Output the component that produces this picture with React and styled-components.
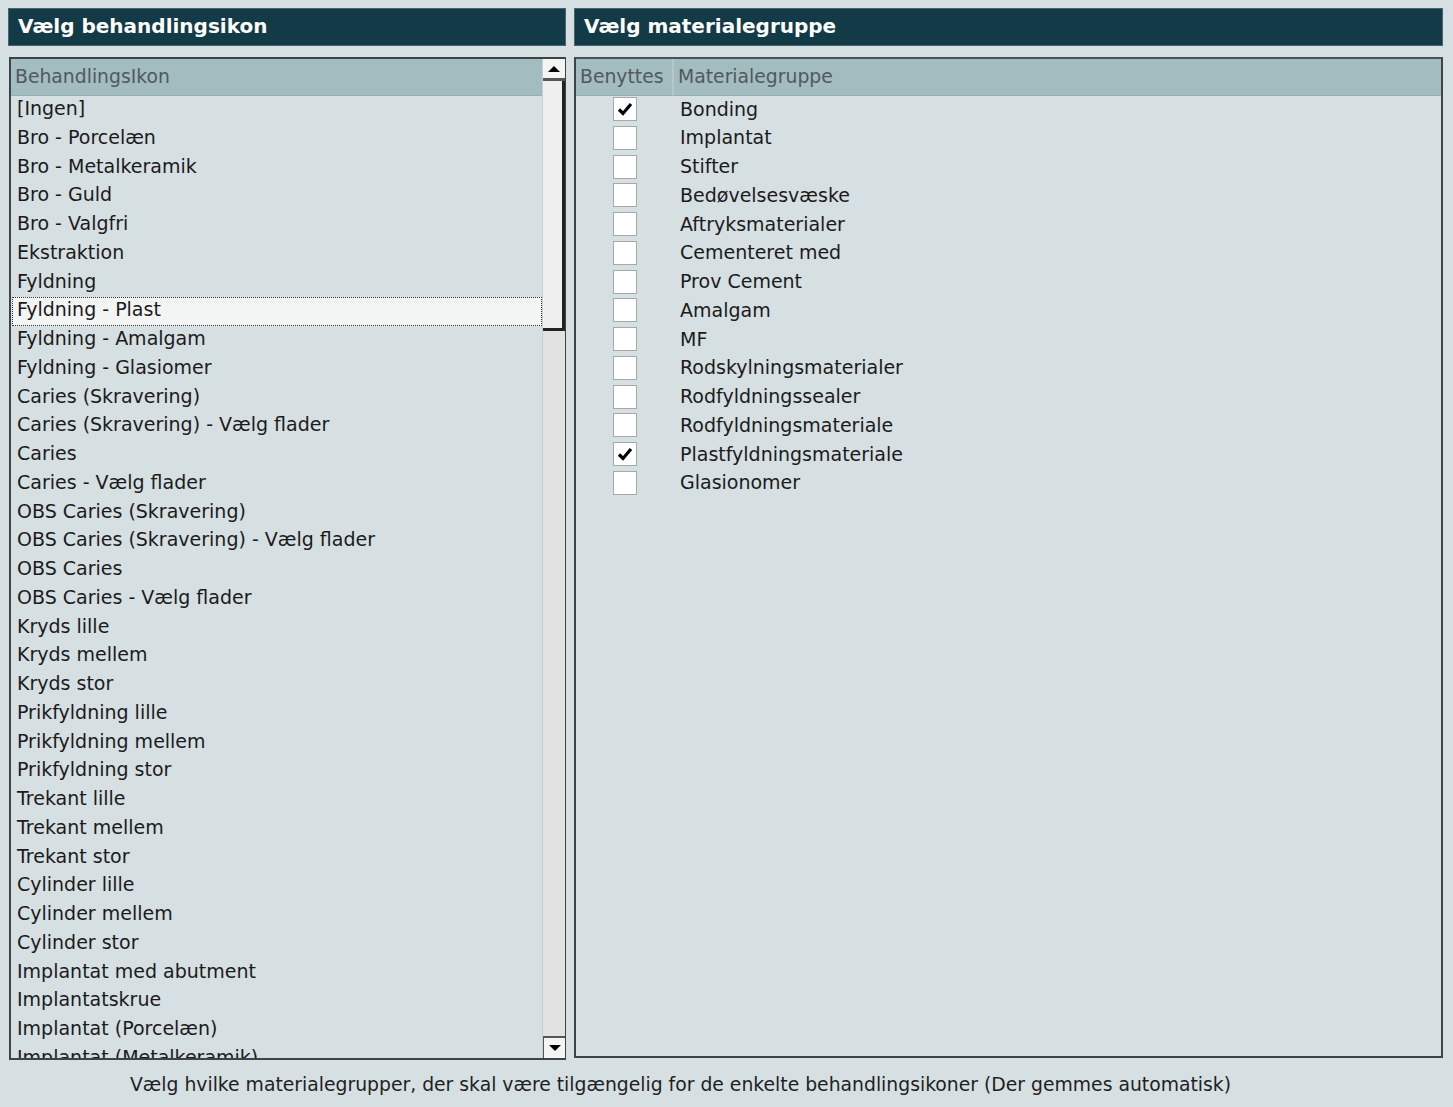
import React, { useState } from "react";
import styled, { createGlobalStyle } from "styled-components";

const ikoner = [
  "[Ingen]",
  "Bro - Porcelæn",
  "Bro - Metalkeramik",
  "Bro - Guld",
  "Bro - Valgfri",
  "Ekstraktion",
  "Fyldning",
  "Fyldning - Plast",
  "Fyldning - Amalgam",
  "Fyldning - Glasiomer",
  "Caries (Skravering)",
  "Caries (Skravering) - Vælg flader",
  "Caries",
  "Caries - Vælg flader",
  "OBS Caries (Skravering)",
  "OBS Caries (Skravering) - Vælg flader",
  "OBS Caries",
  "OBS Caries - Vælg flader",
  "Kryds lille",
  "Kryds mellem",
  "Kryds stor",
  "Prikfyldning lille",
  "Prikfyldning mellem",
  "Prikfyldning stor",
  "Trekant lille",
  "Trekant mellem",
  "Trekant stor",
  "Cylinder lille",
  "Cylinder mellem",
  "Cylinder stor",
  "Implantat med abutment",
  "Implantatskrue",
  "Implantat (Porcelæn)",
  "Implantat (Metalkeramik)",
];

const grupper = [
  { navn: "Bonding", valgt: true },
  { navn: "Implantat", valgt: false },
  { navn: "Stifter", valgt: false },
  { navn: "Bedøvelsesvæske", valgt: false },
  { navn: "Aftryksmaterialer", valgt: false },
  { navn: "Cementeret med", valgt: false },
  { navn: "Prov Cement", valgt: false },
  { navn: "Amalgam", valgt: false },
  { navn: "MF", valgt: false },
  { navn: "Rodskylningsmaterialer", valgt: false },
  { navn: "Rodfyldningssealer", valgt: false },
  { navn: "Rodfyldningsmateriale", valgt: false },
  { navn: "Plastfyldningsmateriale", valgt: true },
  { navn: "Glasionomer", valgt: false },
];

const App = () => {
  const [valgtIkon, setValgtIkon] = useState(7);
  const [materialer, setMaterialer] = useState(grupper);

  const toggle = (idx) => {
    const nye = [...materialer];
    nye[idx] = { ...nye[idx], valgt: !nye[idx].valgt };
    setMaterialer(nye);
  };

  return (
    <>
      <GlobalStyle />
      <Page>
        <Columns>
          <Column>
            <Title>Vælg behandlingsikon</Title>
            <ListBox>
              <ListMain>
                <HeadCell>BehandlingsIkon</HeadCell>
                <Rows>
                  {ikoner.map((navn, idx) => (
                    <IconRow
                      key={idx}
                      selected={idx === valgtIkon}
                      onClick={() => setValgtIkon(idx)}
                    >
                      {navn}
                    </IconRow>
                  ))}
                </Rows>
              </ListMain>
              <ScrollBar>
                <ArrowBtn>
                  <Arrow />
                </ArrowBtn>
                <Thumb />
                <Track />
                <ArrowBtn down>
                  <Arrow down />
                </ArrowBtn>
              </ScrollBar>
            </ListBox>
          </Column>
          <Column>
            <Title>Vælg materialegruppe</Title>
            <GridBox>
              <GridHead>
                <HeadCell divider>Benyttes</HeadCell>
                <HeadCell>Materialegruppe</HeadCell>
              </GridHead>
              {materialer.map(({ navn, valgt }, idx) => (
                <GridRow key={navn}>
                  <CheckCell>
                    <Check onClick={() => toggle(idx)}>
                      {valgt && (
                        <svg width="16" height="14" viewBox="0 0 16 14">
                          <path
                            d="M2 7.5 L6 11.5 L14 2"
                            fill="none"
                            stroke="#000"
                            strokeWidth="3.2"
                          />
                        </svg>
                      )}
                    </Check>
                  </CheckCell>
                  <NameCell>{navn}</NameCell>
                </GridRow>
              ))}
            </GridBox>
          </Column>
        </Columns>
        <Footer>
          Vælg hvilke materialegrupper, der skal være tilgængelig for de enkelte
          behandlingsikoner (Der gemmes automatisk)
        </Footer>
      </Page>
    </>
  );
};

const GlobalStyle = createGlobalStyle`
  html, body {
    margin: 0;
    background: #d6dfe2;
    font-family: "DejaVu Sans", Verdana, sans-serif;
  }
`;

const Page = styled.div`
  width: 1453px;
  height: 1107px;
  box-sizing: border-box;
  padding: 8px 10px 0 8px;
  display: flex;
  flex-direction: column;
  background: #d6dfe2;
  overflow: hidden;
`;

const Columns = styled.div`
  display: grid;
  grid-template-columns: 558px 869px;
  gap: 8px;
`;

const Column = styled.div`
  display: flex;
  flex-direction: column;
  gap: 11px;
`;

const Title = styled.div`
  height: 38px;
  box-sizing: border-box;
  background: #133a47;
  border: 1px solid #46656c;
  color: #fff;
  font-weight: bold;
  font-size: 20px;
  line-height: 35px;
  padding-left: 9px;
`;

const ListBox = styled.div`
  margin-left: 1px;
  height: 1003px;
  box-sizing: border-box;
  border: 2px solid #3d4446;
  border-right-width: 1px;
  display: flex;
  overflow: hidden;
`;

const ListMain = styled.div`
  flex: 1;
  display: flex;
  flex-direction: column;
  min-width: 0;
`;

const HeadCell = styled.div`
  height: 37px;
  box-sizing: border-box;
  background: #a3bcbf;
  color: #4f5a5c;
  font-size: 18.8px;
  line-height: 35px;
  padding-left: 4px;
  border-bottom: 1px solid #94aeb1;
  border-right: ${(p) => (p.divider ? "2px solid #b5c9cb" : "none")};
  white-space: nowrap;
`;

const Rows = styled.div`
  flex: 1;
  overflow: hidden;
  padding-left: 1px;
`;

const IconRow = styled.div`
  height: 28.75px;
  box-sizing: border-box;
  line-height: 23px;
  font-size: 19px;
  color: #1b1b1b;
  padding-left: 4px;
  white-space: nowrap;
  cursor: default;
  background: ${(p) => (p.selected ? "#f3f4f4" : "transparent")};
  border: 1px dotted ${(p) => (p.selected ? "#333" : "transparent")};
`;

const ScrollBar = styled.div`
  width: 22px;
  display: flex;
  flex-direction: column;
  background: #e4e4e4;
  border-left: 1px solid #c9cfd0;
`;

const ArrowBtn = styled.div`
  height: 22px;
  box-sizing: border-box;
  background: #f4f4f4;
  border: 1px solid #555;
  border-width: ${(p) => (p.down ? "2px 0 0 1px" : "0 0 3px 0")};
  display: flex;
  align-items: center;
  justify-content: center;
`;

const Arrow = styled.div`
  width: 0;
  height: 0;
  border-left: 6px solid transparent;
  border-right: 6px solid transparent;
  border-bottom: ${(p) => (p.down ? "none" : "6px solid #000")};
  border-top: ${(p) => (p.down ? "6px solid #000" : "none")};
`;

const Thumb = styled.div`
  height: 250px;
  box-sizing: border-box;
  background: #f0f0f0;
  border-right: 3px solid #222;
  border-bottom: 3px solid #222;
`;

const Track = styled.div`
  flex: 1;
  background: #e2e2e2;
`;

const GridBox = styled.div`
  height: 1001px;
  box-sizing: border-box;
  border: 2px solid #3d4446;
  border-top-color: #4a5254;
  overflow: hidden;
`;

const GridHead = styled.div`
  display: grid;
  grid-template-columns: 98px 1fr;
`;

const GridRow = styled.div`
  display: grid;
  grid-template-columns: 98px 1fr;
  height: 28.75px;
  box-sizing: border-box;
  padding-bottom: 4px;
  align-items: center;
`;

const CheckCell = styled.div`
  display: flex;
  justify-content: flex-start;
  padding-left: 37px;
  padding-top: 1px;
`;

const Check = styled.div`
  width: 24px;
  height: 24px;
  box-sizing: border-box;
  background: #fff;
  border: 1px solid #a8a8a8;
  display: flex;
  align-items: center;
  justify-content: center;
  cursor: pointer;
`;

const NameCell = styled.div`
  font-size: 19px;
  color: #1b1b1b;
  padding-left: 6px;
  white-space: nowrap;
`;

const Footer = styled.div`
  padding: 14px 0 0 122px;
  font-size: 18.8px;
  color: #1f1f1f;
  white-space: nowrap;
`;

export default App;
